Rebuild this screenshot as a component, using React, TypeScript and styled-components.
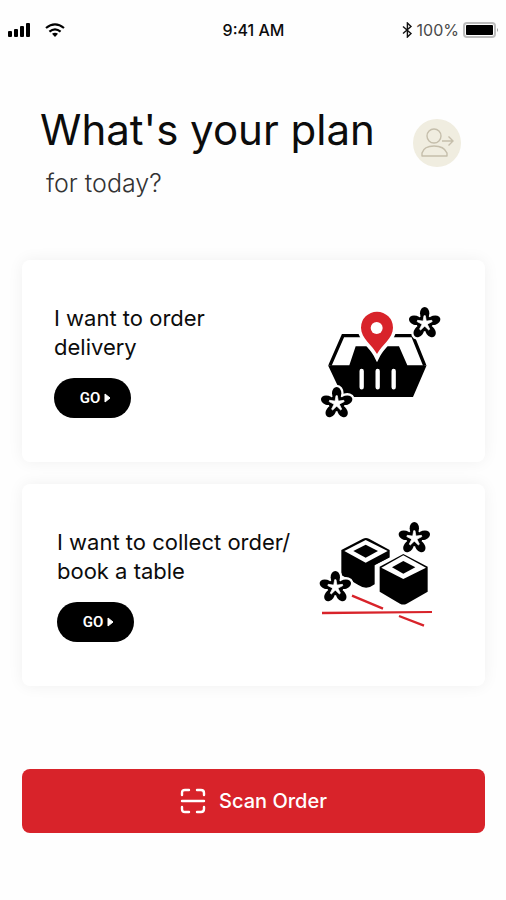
import React from "react";
import styled, { createGlobalStyle } from "styled-components";

const GlobalStyle = createGlobalStyle`
  *, *::before, *::after { box-sizing: border-box; }
  body {
    margin: 0;
    background: #fefefe;
    color: #0c0c0c;
    font-family: Inter, Roboto, "Liberation Sans", sans-serif;
  }
  button { font: inherit; border: 0; cursor: pointer; }
`;

const Screen = styled.div`
  display: flex;
  flex-direction: column;
  min-height: 100vh;
`;

const StatusBar = styled.div`
  display: grid;
  grid-template-columns: 1fr auto 1fr;
  align-items: center;
  height: 60px;
  padding: 0 7px 0 8px;
  font-size: 16px;
`;

const StatusGroup = styled.div<{ $end?: boolean }>`
  display: flex;
  align-items: center;
  justify-content: ${(p) => (p.$end ? "flex-end" : "flex-start")};
  gap: ${(p) => (p.$end ? 4 : 14)}px;
`;

const Clock = styled.time`
  font-weight: 500;
`;

const Charge = styled.span`
  color: #4a4a4a;
`;

const Header = styled.header`
  display: flex;
  align-items: flex-start;
  justify-content: space-between;
  padding: 44px 45px 0 40px;
`;

const Title = styled.h1`
  margin: 0;
  font-size: 42px;
  line-height: 52px;
  font-weight: 400;
`;

const Subtitle = styled.p`
  margin: 12px 0 0;
  padding-left: 6px;
  color: #333;
  font-size: 25px;
  line-height: 30px;
  font-weight: 300;
`;

const ProfileButton = styled.button`
  display: grid;
  place-items: center;
  width: 48px;
  height: 48px;
  margin-top: 15px;
  padding: 0;
  border-radius: 50%;
  background: #f0ede0;
`;

const Main = styled.main`
  display: flex;
  flex-direction: column;
  gap: 22px;
  padding: 62px 21px 40px 22px;
`;

const Card = styled.section<{ $inset: number }>`
  display: flex;
  align-items: center;
  justify-content: space-between;
  min-height: 202px;
  padding: 0 35px 0 ${(p) => p.$inset}px;
  border-radius: 8px;
  background: #fff;
  box-shadow: 0 0 16px rgba(0, 0, 0, 0.06);
`;

const CardTitle = styled.h2`
  margin: 0 0 16px;
  font-size: 22px;
  line-height: 29px;
  font-weight: 400;
  white-space: nowrap;
`;

const GoButton = styled.button`
  display: flex;
  align-items: center;
  justify-content: center;
  gap: 4px;
  width: 77px;
  height: 40px;
  padding: 0 0 0 6px;
  border-radius: 20px;
  background: #000;
  color: #fff;
  && {
    font-family: Roboto, sans-serif;
    font-size: 15px;
    font-weight: 600;
  }
`;

const Art = styled.svg`
  flex: none;
  width: 140px;
  height: 130px;
  margin-left: -40px;
`;

const ScanButton = styled.button`
  display: flex;
  align-items: center;
  justify-content: center;
  gap: 13px;
  height: 64px;
  margin-top: 61px;
  border-radius: 8px;
  background: #d8232a;
  color: #fff;
  && {
    font-size: 20px;
    font-weight: 500;
  }
`;

const petals = [0, 72, 144, 216, 288];

function Flower({ x, y }: { x: number; y: number }) {
  return (
    <g transform={`translate(${x} ${y})`}>
      <g fill="#fff" stroke="#fff" strokeWidth="16">
        {petals.map((a) => (
          <ellipse key={a} cy="-30" rx="13" ry="18" transform={`rotate(${a})`} />
        ))}
      </g>
      <circle r="24" fill="#000" />
      {petals.map((a) => (
        <ellipse key={a} cy="-30" rx="14" ry="19" transform={`rotate(${a})`} fill="#000" />
      ))}
      {petals.map((a) => (
        <path key={a} d="M-6 0 L-2 -23 H2 L6 0 Z" transform={`rotate(${a})`} fill="#fff" stroke="#fff" strokeWidth="2" />
      ))}
    </g>
  );
}

function DeliveryArt() {
  return (
    <Art viewBox="0 0 420 390" aria-hidden="true">
      <path d="M60 208 L99 119 H308 L344 208" fill="#fff" stroke="#000" strokeWidth="10" />
      <path d="M54 208 H118 L137 151 H267 L292 208 H350 L309 303 H99 Z" fill="#000" />
      <path d="M155 225 V274 M203 225 V274 M251 225 V274" stroke="#fff" strokeWidth="13" strokeLinecap="round" />
      <path
        d="M201 174 C188 148 153 127 153 95 A48 48 0 0 1 249 95 C249 127 214 148 201 174 Z"
        fill="#d8232a"
        stroke="#fff"
        strokeWidth="22"
        paintOrder="stroke"
      />
      <circle cx="200" cy="96" r="18" fill="#fff" />
      <Flower x={344} y={82} />
      <Flower x={80} y={322} />
    </Art>
  );
}

function SushiArt() {
  return (
    <Art viewBox="0 15 420 390" aria-hidden="true">
      <path d="M94 105 L159 71 Q168 67 177 71 L239 105 V128 L194 151 V208 Q170 227 145 210 L94 180 Z" fill="#000" />
      <path d="M103 108 L167 75 L233 108 L167 143 Z" fill="#fff" />
      <path d="M130 108 L167 89 L204 108 L167 128 Z" fill="#000" />
      <path
        d="M209 155 L280 117 L353 155 V230 L290 266 Q280 271 270 266 L209 230 Z"
        fill="#000"
        stroke="#fff"
        strokeWidth="20"
        paintOrder="stroke"
      />
      <path d="M214 158 L280 121 L348 158 L280 192 Z" fill="#fff" />
      <path d="M246 157 L280 138 L316 157 L280 176 Z" fill="#000" />
      <path d="M126 242 L219 281 M267 303 L342 332" stroke="#d8232a" strokeWidth="7" />
      <path d="M36 290 L366 288 V294 L36 298 Z" fill="#d8232a" />
      <Flower x={313} y={70} />
      <Flower x={76} y={217} />
    </Art>
  );
}

function Arrow() {
  return (
    <svg width="7" height="10" viewBox="0 0 7 10" aria-hidden="true">
      <path d="M1 1 L6 5 L1 9 Z" fill="#fff" stroke="#fff" strokeLinejoin="round" />
    </svg>
  );
}

function SignalIcon() {
  return (
    <svg width="23" height="14" viewBox="0 0 23 14" aria-label="Signal">
      <rect x="0" y="8" width="4" height="6" rx="1" />
      <rect x="6" y="6" width="4" height="8" rx="1" />
      <rect x="12" y="3" width="4" height="11" rx="1" />
      <rect x="18" y="0" width="4" height="14" rx="1" />
    </svg>
  );
}

function WifiIcon() {
  return (
    <svg width="20" height="14" viewBox="0 0 20 14" fill="none" stroke="#000" strokeWidth="2.2" aria-label="Wi-Fi">
      <path d="M1 5 Q10 -2.4 19 5" />
      <path d="M4.4 8.6 Q10 4 15.6 8.6" />
      <path d="M7 10.8 Q10 8.8 13 10.8 L10 14 Z" fill="#000" stroke="none" />
    </svg>
  );
}

function BluetoothIcon() {
  return (
    <svg width="11" height="16" viewBox="0 0 11 16" fill="none" stroke="#111" strokeWidth="1.4" aria-label="Bluetooth">
      <path d="M1 4.5 L9 11.5 L5.4 15 V1 L9 4.5 L1 11.5" />
    </svg>
  );
}

function BatteryIcon() {
  return (
    <svg width="36" height="16" viewBox="0 0 36 16" aria-label="Battery">
      <rect x="1" y="1" width="31" height="14" rx="3" fill="#fff" stroke="#bdbdbd" strokeWidth="2" />
      <rect x="3" y="3" width="27" height="10" rx="1" />
      <path d="M34 6 Q36 8 34 10 Z" fill="#999" />
    </svg>
  );
}

function ProfileIcon() {
  return (
    <svg width="34" height="30" viewBox="0 0 34 30" fill="none" stroke="#c5beab" strokeWidth="1.4" aria-hidden="true">
      <circle cx="14" cy="8" r="7" />
      <path d="M2 28 V25 Q4 18 14 18 Q24 18 27 25 V28 Z" strokeLinejoin="round" />
      <path d="M22 13 H33 M28.5 8.5 L33 13 L28.5 17.5" />
    </svg>
  );
}

function ScanIcon() {
  return (
    <svg width="26" height="26" viewBox="0 0 26 26" fill="none" stroke="#fff" strokeWidth="2.4" strokeLinecap="round" aria-hidden="true">
      <path d="M2 7 V5 Q2 2 5 2 H9 M17 2 H21 Q24 2 24 5 V7 M24 19 V21 Q24 24 21 24 H17 M9 24 H5 Q2 24 2 21 V19 M2 13 H24" />
    </svg>
  );
}

export default function App() {
  return (
    <Screen>
      <GlobalStyle />
      <StatusBar>
        <StatusGroup>
          <SignalIcon />
          <WifiIcon />
        </StatusGroup>
        <Clock>9:41 AM</Clock>
        <StatusGroup $end>
          <BluetoothIcon />
          <Charge>100%</Charge>
          <BatteryIcon />
        </StatusGroup>
      </StatusBar>
      <Header>
        <div>
          <Title>What's your plan</Title>
          <Subtitle>for today?</Subtitle>
        </div>
        <ProfileButton type="button" aria-label="Switch account">
          <ProfileIcon />
        </ProfileButton>
      </Header>
      <Main>
        <Card $inset={32}>
          <div>
            <CardTitle>
              I want to order
              <br />
              delivery
            </CardTitle>
            <GoButton type="button">
              GO <Arrow />
            </GoButton>
          </div>
          <DeliveryArt />
        </Card>
        <Card $inset={35}>
          <div>
            <CardTitle>
              I want to collect order/
              <br />
              book a table
            </CardTitle>
            <GoButton type="button">
              GO <Arrow />
            </GoButton>
          </div>
          <SushiArt />
        </Card>
        <ScanButton type="button">
          <ScanIcon />
          Scan Order
        </ScanButton>
      </Main>
    </Screen>
  );
}
